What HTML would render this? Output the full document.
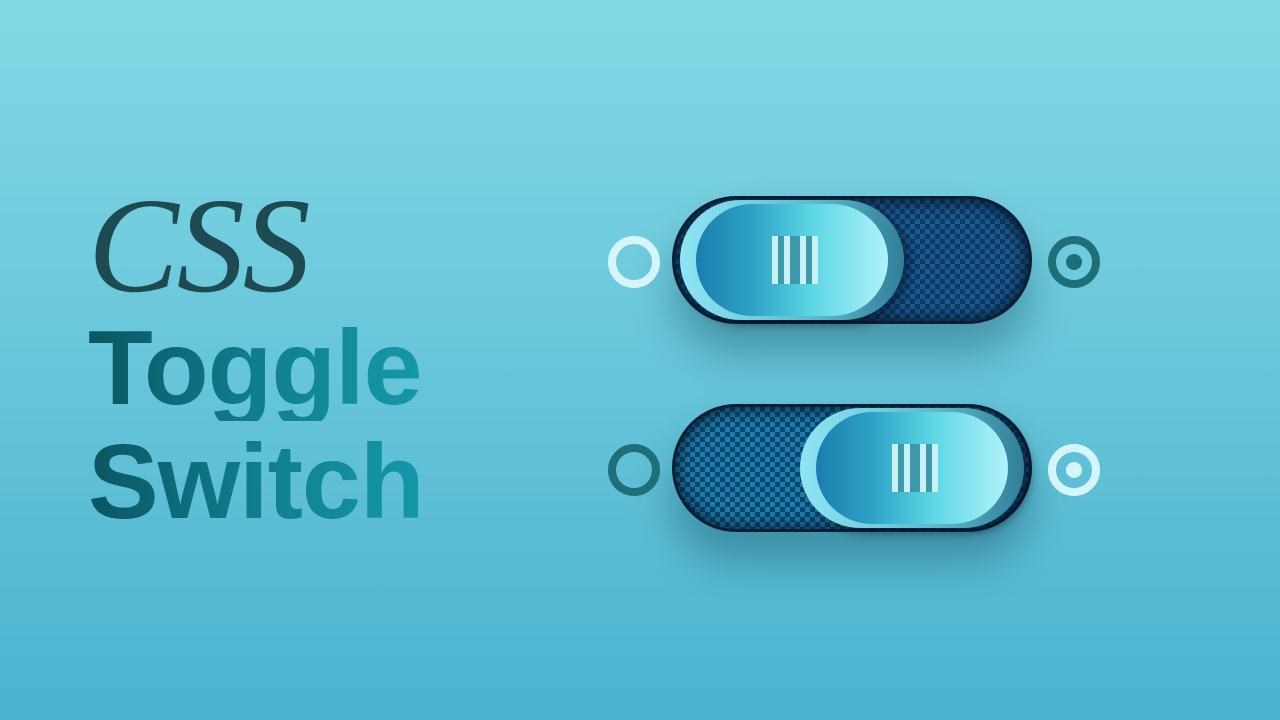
<!DOCTYPE html>
<html><head><meta charset="utf-8"><style>
html,body{margin:0;padding:0}
body{width:1280px;height:720px;overflow:hidden;position:relative;
background:linear-gradient(180deg,#82d9e5 0%,#68c6da 50%,#4bb2cf 100%);font-family:"Liberation Sans",sans-serif}
.css{position:absolute;left:88px;top:178px;font-family:"Liberation Serif",serif;font-style:italic;font-size:136px;color:#1e4a52;letter-spacing:-2px;line-height:1}
.big{position:absolute;left:88px;font-weight:bold;font-size:106px;letter-spacing:-1px;line-height:1;
background:linear-gradient(90deg,#0b5561 0%,#0f7e8e 50%,#1598aa 100%);-webkit-background-clip:text;background-clip:text;color:transparent}
.track{position:absolute;left:672px;width:360px;height:128px;border-radius:64px;background:#0a1f33;
box-shadow:0 30px 40px rgba(10,60,80,.35)}
.track .in{position:absolute;left:3px;top:3px;right:3px;bottom:3px;border-radius:61px;
background:repeating-conic-gradient(#0e3a66 0 25%,#1a5a8e 0 50%) 0 0/10px 10px;box-shadow:inset 0 0 18px #041020}
.track.t2 .in{background:repeating-conic-gradient(#0d4470 0 25%,#1880a8 0 50%) 0 0/10px 10px}
.knob{position:absolute;top:4px;width:224px;height:120px;border-radius:60px;
background:linear-gradient(90deg,#8ee6f4,#5fb9cc 60%,#2f7f98);box-shadow:6px 4px 10px rgba(0,10,30,.5)}
.knob .k{position:absolute;left:16px;top:4px;width:192px;height:112px;border-radius:56px;
background:linear-gradient(90deg,#1a7eae 0%,#2ea3c6 30%,#5cd6e4 60%,#b0f2fa 100%)}
.bars{position:absolute;left:76px;top:32px;width:46px;height:48px;
background:linear-gradient(90deg,#c9f2f8 0 6px,#3e9aaa 6px 12px,#c9f2f8 12px 18px,#3e9aaa 18px 28px,#c9f2f8 28px 34px,#3e9aaa 34px 40px,#c9f2f8 40px 46px)}
.ring{position:absolute;width:36px;height:36px;border-radius:50%;border:8px solid}
.dot{position:absolute;left:10px;top:10px;width:16px;height:16px;border-radius:50%}
</style></head><body>
<div class="css">CSS</div>
<div class="big" style="top:315px">Toggle</div>
<div class="big" style="top:429px">Switch</div>

<div class="track" style="top:196px"><div class="in"></div>
<div class="knob" style="left:8px"><div class="k"><div class="bars"></div></div></div></div>
<div class="track t2" style="top:404px"><div class="in"></div>
<div class="knob" style="left:128px"><div class="k"><div class="bars"></div></div></div></div>

<div class="ring" style="left:608px;top:236px;border-color:#d4f6fb"></div>
<div class="ring" style="left:1048px;top:236px;border-color:#1e6f78"><div class="dot" style="background:#1e6f78"></div></div>
<div class="ring" style="left:608px;top:444px;border-color:#1e6f78"></div>
<div class="ring" style="left:1048px;top:444px;border-color:#d4f6fb"><div class="dot" style="background:#d4f6fb"></div></div>
</body></html>
